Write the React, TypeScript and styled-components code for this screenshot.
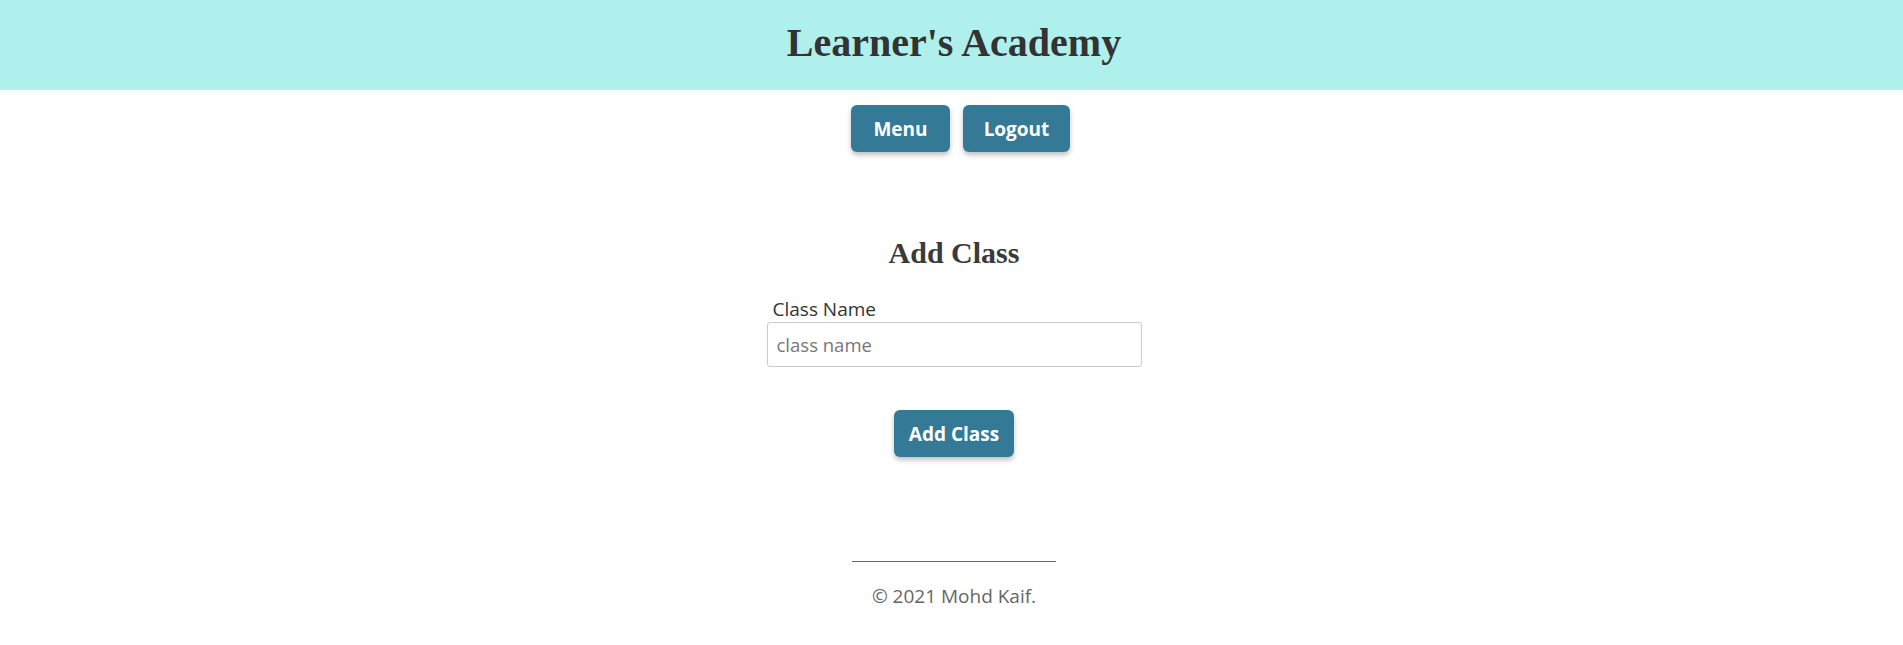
import React from "react";
import styled, { createGlobalStyle } from "styled-components";

const GlobalStyle = createGlobalStyle`
  html, body { margin: 0; padding: 0; background: #ffffff; }
  body { font-family: "Open Sans", "Noto Sans", sans-serif; color: #333333; }
`;

const Page = styled.div`
  display: flex;
  flex-direction: column;
  min-height: 645px;
`;

const Header = styled.header`
  height: 90px;
  background: #b0f0ec;
  display: flex;
  align-items: center;
  justify-content: center;
  padding-left: 5px;
`;

const Title = styled.h1`
  margin: 0;
  font-family: "Liberation Serif", "Times New Roman", serif;
  font-weight: bold;
  font-size: 40px;
  color: #333333;
  line-height: 1;
  transform: translateY(-2px);
`;

const Nav = styled.nav`
  display: flex;
  justify-content: center;
  padding: 15px 0 0 5px;
`;

const Button = styled.button<{ $width: number; $inset?: boolean }>`
  width: ${(p) => p.$width}px;
  height: 47px;
  margin-left: ${(p) => (p.$inset ? 0 : 13)}px;
  border: none;
  border-radius: 6px;
  background: #347a97;
  color: #ffffff;
  font-family: "Open Sans", "Noto Sans", sans-serif;
  font-weight: 700;
  font-size: 19px;
  box-shadow: 0 3px 5px rgba(0, 0, 0, 0.25);
  cursor: pointer;
  padding: 0;
`;

const Main = styled.main`
  display: flex;
  flex-direction: column;
  align-items: center;
  padding-left: 5px;
`;

const Heading = styled.h2`
  margin: 84px 0 0;
  font-family: "Liberation Serif", "Times New Roman", serif;
  font-weight: bold;
  font-size: 30px;
  line-height: 34px;
  color: #3a3a3a;
`;

const Field = styled.div`
  display: flex;
  flex-direction: column;
  width: 375px;
  margin-top: 28px;
`;

const Label = styled.label`
  font-size: 19px;
  line-height: 23px;
  color: #333333;
  padding-left: 6px;
  margin-bottom: 1px;
`;

const Input = styled.input`
  box-sizing: border-box;
  width: 375px;
  height: 45px;
  border: 1px solid #cccccc;
  border-radius: 3px;
  padding: 0 9px;
  font-family: "Open Sans", "Noto Sans", sans-serif;
  font-size: 18.5px;
  color: #333333;
  &::placeholder { color: #777777; }
`;

const SubmitRow = styled.div`
  margin-top: 43px;
  display: flex;
  justify-content: center;
`;

const Footer = styled.footer`
  display: flex;
  flex-direction: column;
  align-items: center;
  padding-left: 5px;
  margin-top: 104px;
`;

const Rule = styled.hr`
  width: 204px;
  margin: 0;
  border: none;
  border-top: 1px solid #666666;
`;

const Copy = styled.p`
  margin: 21px 0 0;
  font-size: 19px;
  color: #666666;
`;

export default function App() {
  return (
    <Page>
      <GlobalStyle />
      <Header>
        <Title>Learner's Academy</Title>
      </Header>
      <Nav>
        <Button $width={99}>Menu</Button>
        <Button $width={107}>Logout</Button>
      </Nav>
      <Main>
        <Heading>Add Class</Heading>
        <Field>
          <Label htmlFor="cn">Class Name</Label>
          <Input id="cn" placeholder="class name" />
        </Field>
        <SubmitRow>
          <Button $width={120} $inset>Add Class</Button>
        </SubmitRow>
      </Main>
      <Footer>
        <Rule />
        <Copy>© 2021 Mohd Kaif.</Copy>
      </Footer>
    </Page>
  );
}
